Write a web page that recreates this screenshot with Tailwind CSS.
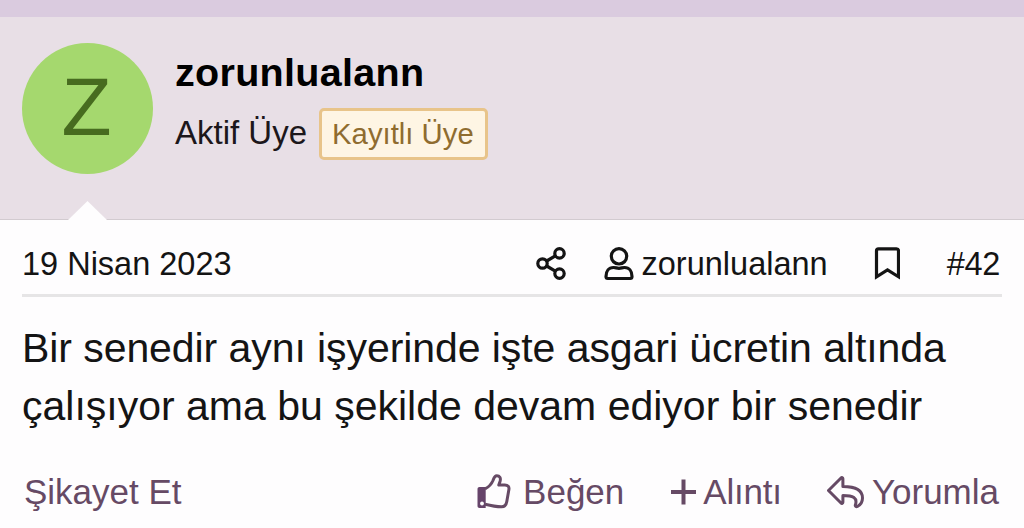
<!DOCTYPE html>
<html lang="tr">
<head>
    <meta charset="UTF-8">
    <meta name="viewport" content="width=device-width, initial-scale=1.0">
    <title>Forum Mesajı</title>
    <script src="https://cdn.jsdelivr.net/npm/@tailwindcss/browser@4"></script>
</head>
<body class="h-[528px] overflow-hidden bg-[#fefdfe] font-['Liberation_Sans',Arial,sans-serif] text-[#141414]">

    <article class="flex h-full flex-col">
        <!-- Kullanıcı bilgisi -->
        <header class="relative flex h-[220px] shrink-0 gap-[22px] border-t-[17px] border-b border-t-[#dacbdf] border-b-[#d2cbd0] bg-[#e8dfe6] px-[22px] pt-[26px]">
            <div class="flex size-[131px] shrink-0 items-center justify-center rounded-full bg-[#a5d86e] text-[82px] leading-none text-[#476b1f]">
                <span class="block pr-[2px] pb-[4px]">Z</span>
            </div>
            <div>
                <h3 class="mt-[5px] text-[39.5px] leading-[48px] font-bold tracking-[0.3px] text-black">zorunlualann</h3>
                <div class="mt-[13px] flex items-center gap-[12px]">
                    <span class="-mt-[4px] text-[33px] leading-[51px] text-[#1c171b]">Aktif Üye</span>
                    <span class="-mt-px h-[52px] w-[169px] rounded-[5px] border-[3px] border-[#e8c48a] bg-[#fef5e4] pl-[10px] text-[29.3px] leading-[46px] whitespace-nowrap text-[#8f6c2f]">Kayıtlı Üye</span>
                </div>
            </div>
            <svg class="absolute -bottom-[1px] left-[68px] h-[19px] w-[39px]" viewBox="0 0 39 19" fill="#fefdfe">
                <path d="M0 19 19.5 0 39 19z"/>
            </svg>
        </header>

        <main class="flex flex-col px-[22px]">
            <div class="flex h-[77px] items-center border-b-[3px] border-[#e6e5e6] pt-[14px] pr-[2px] text-[32.5px] leading-[40px]">
                <time class="mr-auto">19 Nisan 2023</time>
                <svg class="mr-[37px] h-[34px] w-[31px]" viewBox="0 0 31 34" fill="none" stroke="currentColor" stroke-width="3.2">
                    <circle cx="6.5" cy="16.5" r="4.7"/>
                    <circle cx="23.5" cy="6.400" r="4.7"/>
                    <circle cx="23.5" cy="26.600" r="4.7"/>
                    <path d="M10.7 14 19.3 8.900M10.7 19l8.6 5.100"/>
                </svg>
                <svg class="mr-[8px] h-[34px] w-[30px]" viewBox="0 0 30 34" fill="none" stroke="currentColor" stroke-width="3.2" stroke-linejoin="round">
                    <circle cx="15" cy="9.300" r="7.700"/>
                    <path d="M2 29.500c0-5.500 2.800-9 7.500-9 2.200 0 3.200.8 5.500.8s3.300-.8 5.500-.8c4.700 0 7.500 3.500 7.500 9 0 1.200-.6 2-1.800 2H3.800c-1.200 0-1.800-.8-1.800-2z"/>
                </svg>
                <span class="mr-[46px]">zorunlualann</span>
                <svg class="mr-[47px] h-[34px] w-[26px]" viewBox="0 0 26 34" fill="none" stroke="currentColor" stroke-width="3.2">
                    <path d="M2.500 29.800V3.800C2.500 2.500 3.200 1.800 4.500 1.800h18c1.300 0 2 .7 2 2v26L13.500 23z"/>
                </svg>
                <span class="tracking-[-0.3px]">#42</span>
            </div>

            <p class="mt-[22px] text-[41px] leading-[58px] whitespace-nowrap">
                <span class="tracking-[-0.07px]">Bir senedir aynı işyerinde işte asgari ücretin altında</span><br>
                çalışıyor ama bu şekilde devam ediyor bir senedir
            </p>

            <footer class="mt-[37px] flex h-[40px] items-center pr-[3px] pl-[2px] text-[35px] leading-[40px] text-[#664a65]">
                <span class="mr-auto">Şikayet Et</span>
                <span class="mr-[46px] flex items-center gap-[12px]">
                    <svg class="h-[38px] w-[35px]" viewBox="0 0 35 38" fill="none" stroke="currentColor" stroke-width="3" stroke-linejoin="round">
                        <path d="M3.500 14h6.200V35H3.500c-1.200 0-2-.8-2-2V16c0-1.200.8-2 2-2z" fill="#66446a" stroke="none"/>
                        <path d="M9 15.800c4-1.800 6.500-4.800 8-8.300 1-2.700 1.500-4.700 3.800-4.700 2.900 0 4.200 2.200 3.300 5.400L22.800 12h6c3.200 0 4.600 1.900 4.100 4.400l-2.100 12c-.6 3.500-2 5.300-5.300 5.300-6.500 0-10.500-1-16.500-2.500"/>
                        <circle cx="6" cy="30.500" r="1.900" fill="#fefdfe" stroke="none"/>
                    </svg>
                    <span>Beğen</span>
                </span>
                <span class="mr-[45px] flex items-center gap-[7px]">
                    <svg class="h-[26px] w-[26px]" viewBox="0 0 26 26" fill="none" stroke="currentColor" stroke-width="4">
                        <path d="M13.500 .5v25M1 13h25"/>
                    </svg>
                    <span class="tracking-[-0.2px]">Alıntı</span>
                </span>
                <span class="flex items-center gap-[7px]">
                    <svg class="h-[34px] w-[38px]" viewBox="0 0 38 34" fill="none" stroke="currentColor" stroke-width="3" stroke-linejoin="round">
                        <path d="M1.500 15.500 14 3c.8-.8 1.900-.4 1.900.8V11.500c12.500 0 19.600 3.300 19.600 11.500 0 3.600-2.100 6.900-5.100 8.500-1.300.7-2.500-.3-2-1.600 2.300-7-2.200-9.400-12.500-9.400v6.700c0 1.200-1.100 1.600-1.900.8z"/>
                    </svg>
                    <span>Yorumla</span>
                </span>
            </footer>
        </main>
    </article>

</body>
</html>
